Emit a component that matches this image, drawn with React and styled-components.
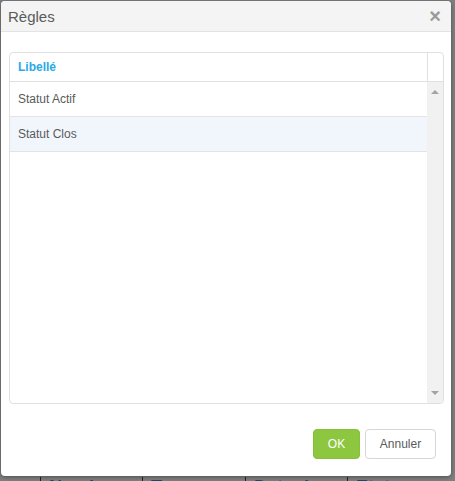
import React from "react";
import styled, { createGlobalStyle } from "styled-components";

const GlobalStyle = createGlobalStyle`
  html, body {
    margin: 0;
    padding: 0;
    background: #ffffff;
    font-family: "Liberation Sans", Arial, sans-serif;
    overflow: hidden;
  }
`;

const Page = styled.div`
  width: 455px;
  height: 481px;
  position: relative;
  overflow: hidden;
`;

const PageRow = styled.div`
  display: grid;
  grid-template-columns: 40px 102px 103px 102px 108px;
  padding-top: 477px;
`;

const PageCell = styled.div`
  border-left: 1px solid #444;
  padding-left: 8px;
  font-size: 18px;
  font-weight: bold;
  color: #2a9ad8;
  white-space: nowrap;
  overflow: hidden;
  &:first-child { border-left: none; }
`;

const Overlay = styled.div`
  position: absolute;
  inset: 0;
  background: rgba(0, 0, 0, 0.5);
`;

const Dialog = styled.div`
  position: absolute;
  left: 1px;
  top: 1px;
  width: 450px;
  height: 475px;
  background: #fff;
  border-radius: 4px;
  box-shadow: 0 1px 4px rgba(0, 0, 0, 0.4);
  display: flex;
  flex-direction: column;
  box-sizing: border-box;
  overflow: hidden;
`;

const TitleBar = styled.div`
  height: 30px;
  background: #f4f4f4;
  border-bottom: 1px solid #e3e3e3;
  display: flex;
  align-items: center;
  justify-content: space-between;
  padding: 0 10px 0 7px;
  flex-shrink: 0;
`;

const Title = styled.span`
  font-size: 15px;
  color: #5a5a5a;
`;

const Close = styled.span`
  font-size: 20px;
  font-weight: bold;
  color: #9a9a9a;
  line-height: 1;
  margin-top: -1px;
`;

const Body = styled.div`
  flex: 1;
  padding: 20px 7px 0 8px;
  display: flex;
  flex-direction: column;
`;

const Grid = styled.div`
  height: 350px;
  border: 1px solid #e0e0e0;
  border-radius: 4px;
  display: grid;
  grid-template-columns: 1fr 16px;
  grid-template-rows: 29px 1fr;
  overflow: hidden;
`;

const HeadCell = styled.div`
  border-bottom: 1px solid #e0e0e0;
  border-left: ${({ $side }) => ($side ? "1px solid #e0e0e0" : "none")};
  display: flex;
  align-items: center;
  padding-left: 8px;
  font-size: 12px;
  font-weight: bold;
  color: #2aa9e6;
`;

const Rows = styled.div`
  display: flex;
  flex-direction: column;
`;

const Row = styled.div`
  height: 34px;
  border-bottom: 1px solid #e3e3e3;
  background: ${({ $alt }) => ($alt ? "#f1f6fd" : "#fff")};
  display: flex;
  align-items: center;
  padding-left: 8px;
  font-size: 12px;
  color: #5a5a5a;
`;

const Scroll = styled.div`
  background: #f1f1f1;
  display: flex;
  flex-direction: column;
  justify-content: space-between;
  align-items: center;
  padding: 8px 0 8px;
`;

const Arrow = styled.span`
  width: 0;
  height: 0;
  border-left: 4px solid transparent;
  border-right: 4px solid transparent;
  ${({ $down }) =>
    $down ? "border-top: 4px solid #a3a3a3;" : "border-bottom: 4px solid #a3a3a3;"}
`;

const Footer = styled.div`
  display: flex;
  justify-content: flex-end;
  gap: 5px;
  padding: 25px 8px 0 0;
`;

const Button = styled.button`
  height: 30px;
  box-sizing: border-box;
  border-radius: 4px;
  font-family: "Liberation Sans", Arial, sans-serif;
  font-size: 12px;
  padding: 0;
  cursor: pointer;
  width: ${({ $w }) => $w}px;
  background: ${({ $primary }) => ($primary ? "#8dc63f" : "#fff")};
  color: ${({ $primary }) => ($primary ? "#fff" : "#5a5a5a")};
  border: 1px solid ${({ $primary }) => ($primary ? "#86bf3a" : "#d6d6d6")};
`;

export default function App() {
  return (
    <>
      <GlobalStyle />
      <Page>
        <PageRow>
          <PageCell />
          <PageCell>Nombre</PageCell>
          <PageCell>Type</PageCell>
          <PageCell>Date de</PageCell>
          <PageCell>Etat</PageCell>
        </PageRow>
        <Overlay />
        <Dialog>
          <TitleBar>
            <Title>Règles</Title>
            <Close>×</Close>
          </TitleBar>
          <Body>
            <Grid>
              <HeadCell>Libellé</HeadCell>
              <HeadCell $side />
              <Rows>
                <Row>Statut Actif</Row>
                <Row $alt>Statut Clos</Row>
              </Rows>
              <Scroll>
                <Arrow />
                <Arrow $down />
              </Scroll>
            </Grid>
            <Footer>
              <Button $primary $w={47}>OK</Button>
              <Button $w={71}>Annuler</Button>
            </Footer>
          </Body>
        </Dialog>
      </Page>
    </>
  );
}
